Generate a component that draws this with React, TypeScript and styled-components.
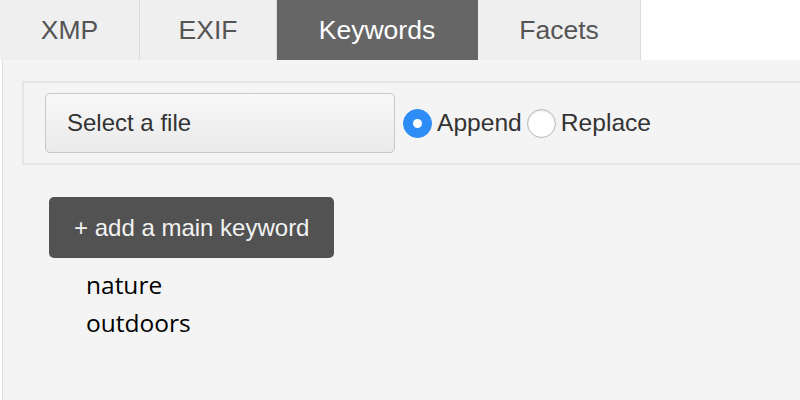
import React from 'react'
import styled, { createGlobalStyle } from 'styled-components'

const GlobalStyle = createGlobalStyle`
  html, body {
    margin: 0;
    padding: 0;
    background: #ffffff;
    overflow: hidden;
    font-family: "Liberation Sans", Arial, sans-serif;
  }
`

const tabs = [
  { label: 'XMP', width: 140 },
  { label: 'EXIF', width: 137 },
  { label: 'Keywords', width: 201 },
  { label: 'Facets', width: 163 },
]

const keywords = ['nature', 'outdoors']

export default function App() {
  return (
    <>
      <GlobalStyle />
      <TabBar>
        {tabs.map((t) => (
          <Tab key={t.label} $active={t.label === 'Keywords'} $width={t.width}>
            {t.label}
          </Tab>
        ))}
      </TabBar>
      <Panel>
        <Toolbar>
          <FileButton>Select a file</FileButton>
          <RadioLabel>
            <RadioDot $checked />
            Append
          </RadioLabel>
          <RadioLabel>
            <RadioDot />
            Replace
          </RadioLabel>
        </Toolbar>
        <KeywordSection>
          <AddButton>+ add a main keyword</AddButton>
          <KeywordList>
            {keywords.map((k) => (
              <li key={k}>{k}</li>
            ))}
          </KeywordList>
        </KeywordSection>
      </Panel>
    </>
  )
}

const TabBar = styled.div`
  display: flex;
  height: 60px;
  background: #ffffff;
`

const Tab = styled.div<{ $active?: boolean; $width: number }>`
  box-sizing: border-box;
  width: ${(p) => p.$width}px;
  display: flex;
  align-items: center;
  justify-content: center;
  font-size: 26.5px;
  color: ${(p) => (p.$active ? '#ffffff' : '#555555')};
  background: ${(p) => (p.$active ? '#666666' : '#efefef')};
  border-right: 1px solid ${(p) => (p.$active ? '#666666' : '#dcdcdc')};
`

const Panel = styled.div`
  box-sizing: border-box;
  height: 340px;
  margin-left: 2px;
  padding: 21px 0 0 19px;
  background: #f4f4f4;
  border-left: 1px solid #dddddd;
`

const Toolbar = styled.div`
  display: flex;
  align-items: center;
  height: 60px;
  padding: 10px 21px;
  border: 2px solid #e6e6e6;
  border-right: none;
`

const FileButton = styled.button`
  box-sizing: border-box;
  width: 350px;
  height: 60px;
  margin-right: 8px;
  padding: 0 21px;
  text-align: left;
  font-family: "Liberation Sans", Arial, sans-serif;
  font-size: 24px;
  color: #333333;
  background: linear-gradient(#f8f8f8, #eaeaea);
  border: 1px solid #c8c8c8;
  border-radius: 5px;
`

const RadioLabel = styled.label`
  display: flex;
  align-items: center;
  gap: 5px;
  margin-right: 5px;
  font-size: 24.6px;
  color: #333333;
`

const RadioDot = styled.span<{ $checked?: boolean }>`
  box-sizing: border-box;
  width: 29px;
  height: 29px;
  border-radius: 50%;
  display: flex;
  align-items: center;
  justify-content: center;
  background: ${(p) => (p.$checked ? '#2d8cf5' : '#ffffff')};
  border: 1px solid ${(p) => (p.$checked ? '#2d8cf5' : '#b8b8b8')};
  box-shadow: ${(p) => (p.$checked ? 'none' : 'inset 0 1px 2px rgba(0,0,0,0.12)')};

  &::after {
    content: '';
    display: ${(p) => (p.$checked ? 'block' : 'none')};
    width: 9px;
    height: 9px;
    border-radius: 50%;
    background: #ffffff;
  }
`

const KeywordSection = styled.div`
  padding: 32px 0 0 27px;
`

const AddButton = styled.button`
  box-sizing: border-box;
  height: 61px;
  padding: 0 25px;
  font-family: "Liberation Sans", Arial, sans-serif;
  font-size: 24px;
  color: #f2f2f2;
  background: #525252;
  border: none;
  border-radius: 5px;
`

const KeywordList = styled.ul`
  list-style: none;
  margin: 8px 0 0;
  padding-left: 37px;
  font-family: "Open Sans", sans-serif;
  font-size: 24.5px;
  font-weight: 500;
  line-height: 38px;
  color: #000000;
`
